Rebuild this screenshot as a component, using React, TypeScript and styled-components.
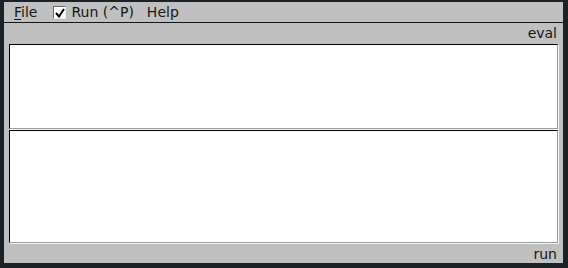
import React from 'react';
import styled, { createGlobalStyle } from 'styled-components';

const GlobalStyle = createGlobalStyle`
  html, body {
    margin: 0;
    padding: 0;
    background: #1b2227;
  }
  body {
    font-family: "DejaVu Sans", "Liberation Sans", sans-serif;
  }
`;

const Frame = styled.div`
  box-sizing: border-box;
  width: 568px;
  height: 268px;
  padding: 2px 5px 5px 4px;
  background: #1b2227;
`;

const Window = styled.div`
  height: 100%;
  display: flex;
  flex-flow: column;
  background: #c0c0c0;
  color: #161616;
  font-size: 14px;
`;

const MenuBar = styled.div`
  box-sizing: border-box;
  height: 21px;
  display: flex;
  align-items: center;
  padding-left: 10px;
  border-bottom: 1px solid #161616;
`;

const MenuItem = styled.div<{ $gap?: number }>`
  display: flex;
  align-items: center;
  gap: 5px;
  margin-left: ${(p) => p.$gap ?? 0}px;
  line-height: 20px;
  white-space: nowrap;
`;

const Mnemonic = styled.span`
  text-decoration: underline;
  text-underline-offset: 2px;
`;

const CheckBox = styled.span`
  box-sizing: border-box;
  width: 13px;
  height: 13px;
  background: #fff;
  border: 1px solid #6a6a6a;
  border-right-color: #e8e8e8;
  border-bottom-color: #e8e8e8;
  display: flex;
  align-items: center;
  justify-content: center;
  margin-top: 1px;
`;

const Body = styled.div`
  flex: 1;
  display: flex;
  flex-flow: column;
  padding: 0 5px;
`;

const Caption = styled.div<{ $h: number }>`
  height: ${(p) => p.$h}px;
  line-height: ${(p) => p.$h}px;
  text-align: right;
  padding-right: 1px;
`;

const Pane = styled.div<{ $h: number }>`
  box-sizing: border-box;
  height: ${(p) => p.$h}px;
  margin-bottom: 1px;
  background: #fff;
  border-top: 1px solid #000;
  border-left: 1px solid #000;
  border-bottom: 1px solid #9c9c9c;
  border-right: 1px solid #9c9c9c;
  box-shadow: 1px 1px 0 #f4f4f4;
`;

const App: React.FC = () => (
  <Frame>
    <GlobalStyle />
    <Window>
      <MenuBar>
        <MenuItem>
          <span>
            <Mnemonic>F</Mnemonic>ile
          </span>
        </MenuItem>
        <MenuItem $gap={16}>
          <CheckBox>
            <svg width="10" height="10" viewBox="0 0 10 10">
              <path d="M1 5 L4 8.5 L9 1" fill="none" stroke="#000" strokeWidth="2" />
            </svg>
          </CheckBox>
          <span>Run (^P)</span>
        </MenuItem>
        <MenuItem $gap={13}>
          <span>Help</span>
        </MenuItem>
      </MenuBar>
      <Body>
        <Caption $h={21}>eval</Caption>
        <Pane $h={85} />
        <Pane $h={113} />
        <Caption $h={20}>run</Caption>
      </Body>
    </Window>
  </Frame>
);

export default App;
